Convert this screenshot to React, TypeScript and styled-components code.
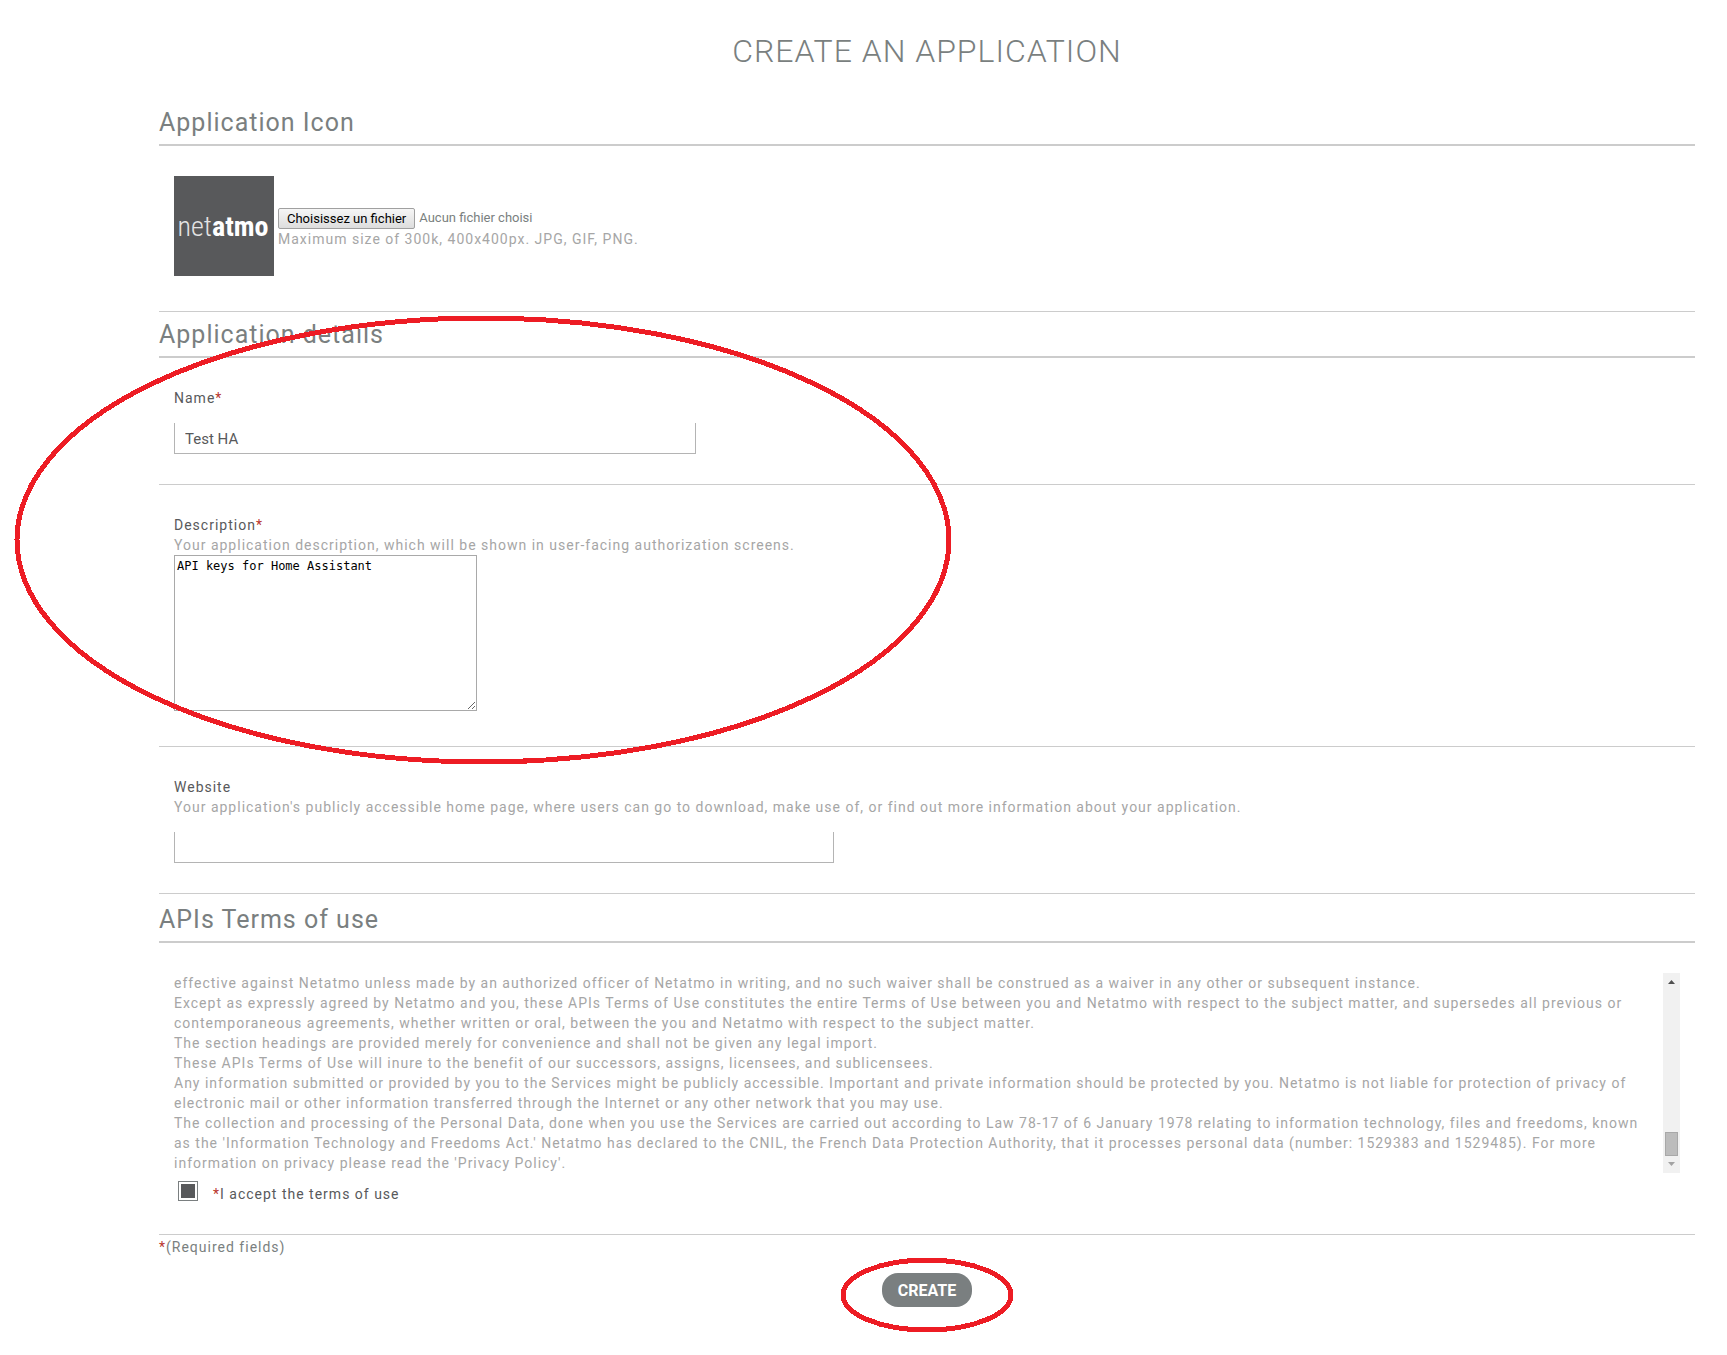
import React, { useState } from "react";
import styled, { createGlobalStyle } from "styled-components";

const color = {
  grey: "#7a7f80",
  dark: "#58595b",
  hint: "#a6a6a6",
  line: "#cccccc",
  field: "#b4b4b4",
  red: "#b8352c",
  marker: "#ed1c24",
};

const GlobalStyle = createGlobalStyle`
  *, *::before, *::after { box-sizing: border-box; }
  body {
    margin: 0;
    background: #fff;
    color: ${color.dark};
    font: 400 14px/20px Roboto, "Liberation Sans", sans-serif;
    letter-spacing: 1px;
  }
  input, textarea, button { font-family: inherit; letter-spacing: normal; }
`;

const Page = styled.main`
  position: relative;
  padding: 32px 32px 48px 159px;
`;

const Title = styled.h1`
  margin: 0 0 39px;
  color: ${color.grey};
  font-size: 32px;
  line-height: 38px;
  font-weight: 300;
  text-align: center;
  text-transform: uppercase;
`;

const SectionTitle = styled.h2<{ $space?: number }>`
  margin: ${(p) => p.$space ?? 0}px 0 0;
  padding-bottom: 7px;
  border-bottom: 2px solid ${color.line};
  color: ${color.grey};
  font-size: 25px;
  line-height: 28px;
  font-weight: 400;
`;

const Field = styled.div<{ $end?: number }>`
  display: flex;
  flex-direction: column;
  align-items: flex-start;
  padding: 30px 15px ${(p) => p.$end ?? 30}px;
  border-bottom: 1px solid ${color.line};
`;

const Label = styled.label`
  color: ${color.dark};
`;

const Hint = styled.p`
  margin: 0;
  color: ${color.hint};
`;

const Star = styled.span`
  color: ${color.red};
`;

const TextInput = styled.input<{ $width: number }>`
  width: ${(p) => p.$width}px;
  max-width: 100%;
  height: 31px;
  margin: 15px 0 0;
  padding: 2px 10px 0;
  border: 1px solid ${color.field};
  border-top: 0;
  border-radius: 0;
  background: #fff;
  color: ${color.dark};
  font-size: 15px;
  outline: none;
`;

const TextArea = styled.textarea`
  width: 303px;
  height: 156px;
  margin: 0;
  padding: 2px;
  border: 1px solid #a9a9a9;
  background: #fff;
  color: #000;
  font: 12px/16px "DejaVu Sans Mono", "Liberation Mono", monospace;
  outline: none;
`;

const IconRow = styled.div`
  display: flex;
  align-items: center;
  gap: 4px;
`;

const Logo = styled.svg`
  display: block;
  flex: none;
  width: 100px;
  height: 100px;
  background: ${color.dark};
  letter-spacing: 0;
`;

const FilePicker = styled.div`
  padding-top: 4px;
`;

const FileRow = styled.div`
  display: flex;
  align-items: center;
  gap: 4px;
  color: ${color.grey};
  font-size: 13px;
  letter-spacing: normal;
`;

const FileInput = styled.input`
  position: absolute;
  width: 1px;
  height: 1px;
  opacity: 0;
`;

const FileButton = styled.label`
  height: 21px;
  padding: 0 8px;
  border: 1px solid #a0a0a0;
  border-radius: 2px;
  background: linear-gradient(#f6f6f6, #dddddd);
  color: #000;
  line-height: 19px;
`;

const TermsFrame = styled.div`
  display: flex;
  align-self: stretch;
`;

const TermsText = styled.div`
  flex: 1;
  min-width: 0;
  padding-right: 12px;
  color: ${color.hint};
  p { margin: 0; }
`;

const ScrollTrack = styled.div`
  display: flex;
  flex-direction: column;
  align-items: center;
  width: 17px;
  background: #f1f1f1;
`;

const Arrow = styled.svg`
  display: block;
  flex: none;
  width: 17px;
  height: 17px;
`;

const Thumb = styled.div`
  width: 13px;
  height: 24px;
  margin-top: auto;
  border: 1px solid #a8a8a8;
  background: #bcbcbc;
`;

const AcceptRow = styled.div`
  display: flex;
  align-items: flex-start;
  gap: 15px;
  padding: 8px 4px 0;
`;

const Checkbox = styled.input`
  appearance: none;
  width: 20px;
  height: 20px;
  margin: 0;
  padding: 2px;
  border: 1px solid ${color.grey};
  background: #fff;
  &:checked {
    background: ${color.dark} content-box;
  }
`;

const AcceptLabel = styled(Label)`
  padding-top: 3px;
`;

const Required = styled.p`
  margin: 2px 0 16px;
  color: ${color.grey};
`;

const Actions = styled.div`
  display: flex;
  justify-content: center;
`;

const ButtonWrap = styled.div`
  position: relative;
`;

const CreateButton = styled.button`
  display: block;
  height: 34px;
  padding: 1px 16px 0;
  border: 0;
  border-radius: 16px;
  background: ${color.grey};
  color: #fff;
  font-size: 16px;
  font-weight: 700;
  line-height: 33px;
  text-transform: uppercase;
`;

const Marker = styled.svg<{ $x: string; $y: number }>`
  position: absolute;
  left: ${(p) => p.$x};
  top: ${(p) => p.$y}px;
  fill: none;
  stroke: ${color.marker};
  stroke-width: 5px;
  shape-rendering: crispEdges;
  pointer-events: none;
`;

const ButtonMarker = styled(Marker)`
  transform: translateX(-50%);
`;

const terms = [
  "effective against Netatmo unless made by an authorized officer of Netatmo in writing, and no such waiver shall be construed as a waiver in any other or subsequent instance.",
  "Except as expressly agreed by Netatmo and you, these APIs Terms of Use constitutes the entire Terms of Use between you and Netatmo with respect to the subject matter, and supersedes all previous or contemporaneous agreements, whether written or oral, between the you and Netatmo with respect to the subject matter.",
  "The section headings are provided merely for convenience and shall not be given any legal import.",
  "These APIs Terms of Use will inure to the benefit of our successors, assigns, licensees, and sublicensees.",
  "Any information submitted or provided by you to the Services might be publicly accessible. Important and private information should be protected by you. Netatmo is not liable for protection of privacy of electronic mail or other information transferred through the Internet or any other network that you may use.",
  "The collection and processing of the Personal Data, done when you use the Services are carried out according to Law 78-17 of 6 January 1978 relating to information technology, files and freedoms, known as the 'Information Technology and Freedoms Act.' Netatmo has declared to the CNIL, the French Data Protection Authority, that it processes personal data (number: 1529383 and 1529485). For more information on privacy please read the 'Privacy Policy'.",
];

export default function App() {
  const [name, setName] = useState("Test HA");
  const [description, setDescription] = useState("API keys for Home Assistant");
  const [website, setWebsite] = useState("");
  const [accepted, setAccepted] = useState(true);

  return (
    <>
      <GlobalStyle />
      <Page>
        <Title>Create an application</Title>
        <form onSubmit={(e) => e.preventDefault()}>
          <SectionTitle>Application Icon</SectionTitle>
          <Field $end={35}>
            <IconRow>
              <Logo viewBox="0 0 100 100">
                <text
                  x="49"
                  y="60"
                  textAnchor="middle"
                  fontFamily='"Liberation Sans Narrow", "Roboto Condensed", Roboto, sans-serif'
                  fontSize="28"
                  fill="#fff"
                >
                  <tspan fontWeight="300" fill="#e4e4e4">net</tspan>
                  <tspan fontWeight="700">atmo</tspan>
                </text>
              </Logo>
              <FilePicker>
                <FileRow>
                  <FileInput id="icon" type="file" />
                  <FileButton htmlFor="icon">Choisissez un fichier</FileButton>
                  <span>Aucun fichier choisi</span>
                </FileRow>
                <Hint>Maximum size of 300k, 400x400px. JPG, GIF, PNG.</Hint>
              </FilePicker>
            </IconRow>
          </Field>

          <SectionTitle $space={9}>Application details</SectionTitle>
          <Field>
            <Label htmlFor="name">Name<Star>*</Star></Label>
            <TextInput id="name" type="text" $width={522} value={name} onChange={(e) => setName(e.target.value)} />
          </Field>
          <Field $end={35}>
            <Label htmlFor="description">Description<Star>*</Star></Label>
            <Hint>Your application description, which will be shown in user-facing authorization screens.</Hint>
            <TextArea
              id="description"
              spellCheck={false}
              value={description}
              onChange={(e) => setDescription(e.target.value)}
            />
          </Field>
          <Field>
            <Label htmlFor="website">Website</Label>
            <Hint>
              Your application's publicly accessible home page, where users can go to download, make use of, or find
              out more information about your application.
            </Hint>
            <TextInput id="website" type="text" $width={660} value={website} onChange={(e) => setWebsite(e.target.value)} />
          </Field>

          <SectionTitle $space={12}>APIs Terms of use</SectionTitle>
          <Field>
            <TermsFrame>
              <TermsText>
                {terms.map((t) => (
                  <p key={t}>{t}</p>
                ))}
              </TermsText>
              <ScrollTrack aria-hidden="true">
                <Arrow viewBox="0 0 17 17" fill="#505050">
                  <path d="M5 11h7L8.500 7z" />
                </Arrow>
                <Thumb />
                <Arrow viewBox="0 0 17 17" fill="#a3a3a3">
                  <path d="M5 6h7L8.500 10z" />
                </Arrow>
              </ScrollTrack>
            </TermsFrame>
            <AcceptRow>
              <Checkbox id="accept" type="checkbox" checked={accepted} onChange={(e) => setAccepted(e.target.checked)} />
              <AcceptLabel htmlFor="accept"><Star>*</Star>I accept the terms of use</AcceptLabel>
            </AcceptRow>
          </Field>
          <Required><Star>*</Star>(Required fields)</Required>

          <Actions>
            <ButtonWrap>
              <CreateButton type="submit">Create</CreateButton>
              <ButtonMarker $x="50%" $y={-16} width="174" height="76" aria-hidden="true">
                <ellipse cx="87" cy="38" rx="84" ry="35" />
              </ButtonMarker>
            </ButtonWrap>
          </Actions>
        </form>
        <Marker $x="14px" $y={315} width="938" height="451" aria-hidden="true">
          <ellipse cx="469" cy="225" rx="466" ry="222" />
        </Marker>
      </Page>
    </>
  );
}
